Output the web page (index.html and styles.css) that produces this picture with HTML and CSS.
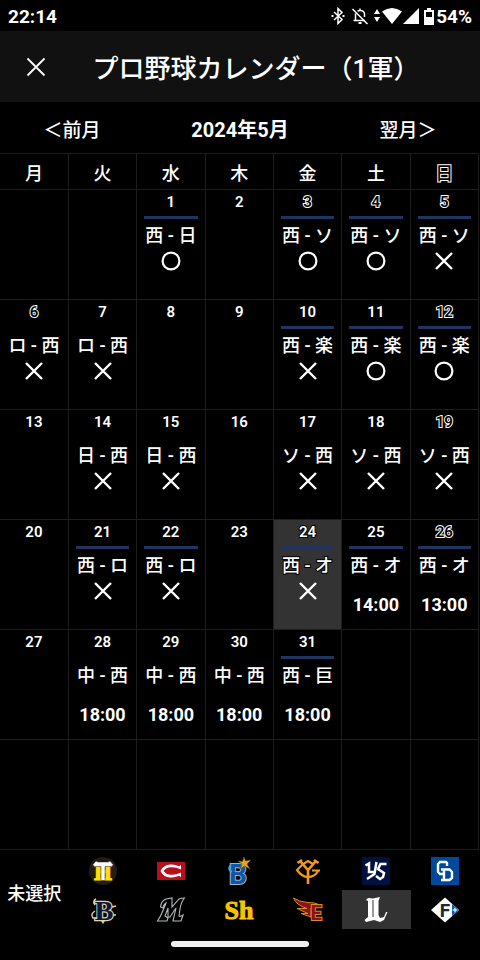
FILE: index.html
```
<!DOCTYPE html>
<html lang="ja">

<head>
    <meta charset="UTF-8">
    <meta name="viewport" content="width=device-width, initial-scale=1.0">
    <title>プロ野球カレンダー</title>
    <link rel="stylesheet" href="styles.css">
</head>

<body>

    <!-- result marks -->
    <svg class="defs" aria-hidden="true">
        <symbol id="win" viewBox="0 0 20 20">
            <circle cx="10" cy="10" r="8.4" fill="none" stroke="#fff" stroke-width="2.2" />
        </symbol>
        <symbol id="lose" viewBox="0 0 20 20">
            <path d="M2 2L18 18M18 2L2 18" fill="none" stroke="#fff" stroke-width="2.4" />
        </symbol>
    </svg>

    <div class="statusbar">
        <span class="clock">22:14</span>
        <div class="status-icons">
            <svg width="14" height="18" viewBox="0 0 14 18" fill="none" stroke="#fff" stroke-width="1.5">
                <path d="M3 5L11 12.5L7 16.5V1.500L11 5.500L3 13" />
                <path d="M0.500 9H2.500M11.500 9H13.500" stroke-width="2" />
            </svg>
            <svg class="bell" width="18" height="18" viewBox="0 0 18 18" fill="none" stroke="#fff" stroke-width="1.5">
                <path d="M4.500 6.500V13M2.500 13.500H14M13.500 10V7.500C13.500 5 12 3.500 9 3.500C8 3.500 7.300 3.700 6.500 4.200M9 3.500V1.500" />
                <path d="M1.500 2L16.500 17" />
                <path d="M7.500 16H10.500" stroke-width="2" />
            </svg>
            <svg class="data" width="6" height="14" viewBox="0 0 6 14" fill="#fff">
                <path d="M3 0L6 5H0ZM3 13L6 8H0Z" />
            </svg>
            <svg class="wifi" width="20" height="16" viewBox="0 0 20 16" fill="#fff">
                <path d="M0 3.500Q10 -3.500 20 3.500L10 16Z" />
            </svg>
            <svg class="signal" width="16" height="16" viewBox="0 0 16 16" fill="#fff">
                <path d="M16 0V16H0Z" />
            </svg>
            <svg class="battery" width="10" height="17" viewBox="0 0 10 17">
                <path d="M3 0H7V2H10V17H0V2H3Z" fill="#fff" />
                <path d="M2 4H8V9H2Z" fill="#000" />
            </svg>
            <span class="percent">54%</span>
        </div>
    </div>

    <header class="header">
        <button class="close" aria-label="閉じる">
            <svg width="20" height="20" viewBox="0 0 20 20" fill="none" stroke="#fff" stroke-width="1.8">
                <path d="M1.500 1.500L18.500 18.500M18.500 1.500L1.500 18.500" />
            </svg>
        </button>
        <h1>プロ野球カレンダー（1軍）</h1>
    </header>

    <nav class="month-nav">
        <button>＜前月</button>
        <h2>2024年5月</h2>
        <button>翌月＞</button>
    </nav>

    <table class="calendar">
        <thead>
            <tr>
                <th>月</th>
                <th>火</th>
                <th>水</th>
                <th>木</th>
                <th>金</th>
                <th>土</th>
                <th class="holiday">日</th>
            </tr>
        </thead>
        <tbody>
            <tr>
                <td></td>
                <td></td>
                <td class="home"><div class="date">1</div><div class="game">西 - 日</div><svg class="mark"><use href="#win" /></svg></td>
                <td><div class="date">2</div></td>
                <td class="home"><div class="date holiday">3</div><div class="game">西 - ソ</div><svg class="mark"><use href="#win" /></svg></td>
                <td class="home"><div class="date holiday">4</div><div class="game">西 - ソ</div><svg class="mark"><use href="#win" /></svg></td>
                <td class="home"><div class="date holiday">5</div><div class="game">西 - ソ</div><svg class="mark"><use href="#lose" /></svg></td>
            </tr>
            <tr>
                <td><div class="date holiday">6</div><div class="game">ロ - 西</div><svg class="mark"><use href="#lose" /></svg></td>
                <td><div class="date">7</div><div class="game">ロ - 西</div><svg class="mark"><use href="#lose" /></svg></td>
                <td><div class="date">8</div></td>
                <td><div class="date">9</div></td>
                <td class="home"><div class="date">10</div><div class="game">西 - 楽</div><svg class="mark"><use href="#lose" /></svg></td>
                <td class="home"><div class="date">11</div><div class="game">西 - 楽</div><svg class="mark"><use href="#win" /></svg></td>
                <td class="home"><div class="date holiday">12</div><div class="game">西 - 楽</div><svg class="mark"><use href="#win" /></svg></td>
            </tr>
            <tr>
                <td><div class="date">13</div></td>
                <td><div class="date">14</div><div class="game">日 - 西</div><svg class="mark"><use href="#lose" /></svg></td>
                <td><div class="date">15</div><div class="game">日 - 西</div><svg class="mark"><use href="#lose" /></svg></td>
                <td><div class="date">16</div></td>
                <td><div class="date">17</div><div class="game">ソ - 西</div><svg class="mark"><use href="#lose" /></svg></td>
                <td><div class="date">18</div><div class="game">ソ - 西</div><svg class="mark"><use href="#lose" /></svg></td>
                <td><div class="date holiday">19</div><div class="game">ソ - 西</div><svg class="mark"><use href="#lose" /></svg></td>
            </tr>
            <tr>
                <td><div class="date">20</div></td>
                <td class="home"><div class="date">21</div><div class="game">西 - ロ</div><svg class="mark"><use href="#lose" /></svg></td>
                <td class="home"><div class="date">22</div><div class="game">西 - ロ</div><svg class="mark"><use href="#lose" /></svg></td>
                <td><div class="date">23</div></td>
                <td class="home today"><div class="date">24</div><div class="game">西 - オ</div><svg class="mark"><use href="#lose" /></svg></td>
                <td class="home"><div class="date">25</div><div class="game">西 - オ</div><div class="time">14:00</div></td>
                <td class="home"><div class="date holiday">26</div><div class="game">西 - オ</div><div class="time">13:00</div></td>
            </tr>
            <tr>
                <td><div class="date">27</div></td>
                <td><div class="date">28</div><div class="game">中 - 西</div><div class="time">18:00</div></td>
                <td><div class="date">29</div><div class="game">中 - 西</div><div class="time">18:00</div></td>
                <td><div class="date">30</div><div class="game">中 - 西</div><div class="time">18:00</div></td>
                <td class="home"><div class="date">31</div><div class="game">西 - 巨</div><div class="time">18:00</div></td>
                <td></td>
                <td></td>
            </tr>
            <tr>
                <td></td>
                <td></td>
                <td></td>
                <td></td>
                <td></td>
                <td></td>
                <td></td>
            </tr>
        </tbody>
    </table>

    <div class="teams">
        <button class="none">未選択</button>

        <button aria-label="阪神">
            <svg class="logo" viewBox="0 0 28 28">
                <circle cx="14" cy="14" r="14" fill="#231a1a" />
                <text x="14" y="23" font-size="20" fill="#ffe100" stroke="#ffe100" class="slab">H</text>
                <path d="M3.500 8L7 4L9 5H19L21 4L24.500 8L22 9.500H16V23.500H12V9.500H6Z" fill="#fff" stroke="#231a1a" stroke-width="0.500" />
            </svg>
        </button>
        <button aria-label="広島">
            <svg class="logo" viewBox="0 0 28 28">
                <rect y="5" width="28" height="18" fill="#b90e1c" />
                <path d="M24 8V12.500Q19 10 14 10.300Q9 10.500 6.500 14Q9 17.500 14 17.700Q19 18 24 15.500V20L22 18.800Q18 20.800 13.500 20.500Q6 20 3.500 14Q6 8 13.500 7.500Q18 7.200 22 9.200Z" fill="#fff" />
            </svg>
        </button>
        <button aria-label="DeNA">
            <svg class="logo" viewBox="0 0 28 28">
                <text x="13" y="27" font-size="28" fill="#0a57ad" stroke="#9eb4c4" stroke-width="2" class="sans">B</text>
                <path d="M6 8Q2 12 7 15" fill="none" stroke="#38a7df" stroke-width="2" />
                <path d="M19 0L20.500 4L26 3L22 7L25 12L19.500 9L15 12L17 7L13 4L17.500 4.500Z" fill="#eaa620" stroke="#6b4d16" stroke-width="0.600" />
            </svg>
        </button>
        <button aria-label="巨人">
            <svg class="logo" viewBox="0 0 28 28" fill="none" stroke="#f39a17">
                <path d="M6 4L14 13L22 4M3.500 6L8 3M20 3L24.500 6M14 13V27" stroke-width="2.600" />
                <path d="M19 7L14 4L9 7L3 13Q8 20 14 20Q21 20 24 14M18 13.500H26" stroke-width="2.200" />
            </svg>
        </button>
        <button aria-label="ヤクルト">
            <svg class="logo" viewBox="0 0 28 28">
                <rect width="28" height="28" fill="#00103f" />
                <g fill="none" stroke="#fff" stroke-width="2.500">
                    <path d="M3.500 8.500L7 6.500V15H12M14.500 5L12.500 17L5 22" />
                    <path d="M24.500 7H18.500L16 12L22 16L21 20L18 22L14 19" />
                </g>
            </svg>
        </button>
        <button aria-label="中日">
            <svg class="logo" viewBox="0 0 28 28">
                <rect width="28" height="28" fill="#00499a" />
                <g fill="none" stroke="#fff" stroke-width="2.400">
                    <path d="M16 9V6L15 5H9L7 7V15L9 17H12" />
                    <path d="M10 12.500H18.500L21 15V21L18.500 23H10M13 13V23" />
                </g>
            </svg>
        </button>

        <button aria-label="オリックス">
            <svg class="logo" viewBox="0 0 28 28">
                <path d="M10 22L14 28L18 22Z" fill="#d8c98c" />
                <text x="15" y="24" font-size="28" fill="#10173f" stroke="#e0d49f" stroke-width="2.400" class="serif">B</text>
                <path d="M7 3Q3 5 6 9M6 15Q1 18 4 22L8 22M23 11L27 10M24 19L27 19" fill="none" stroke="#e0d49f" stroke-width="1.400" />
                <path d="M10 6V22" stroke="#10173f" stroke-width="3" />
            </svg>
        </button>
        <button aria-label="ロッテ">
            <svg class="logo" viewBox="0 0 28 28" fill="#000" stroke="#b5b7b9" stroke-width="1.100">
                <path d="M0.500 25Q4 20 7 12L9 7Q6 9 6 12L3.500 11Q4 5 9 3L15 2V11L22 3Q24 2 27.500 2Q24 6 23 13L22 20Q23 21 26 19L24 25H16L19 12L13 21H11V12L8 20L11 22L10 25Z" />
            </svg>
        </button>
        <button aria-label="ソフトバンク">
            <svg class="logo" viewBox="0 0 28 28">
                <text x="14" y="23" font-size="26" fill="#f8c400" stroke="#f8c400" class="serif">Sh</text>
            </svg>
        </button>
        <button aria-label="楽天">
            <svg class="logo wide" viewBox="0 0 30 28">
                <path d="M0.500 2Q6 6 15 6.500Q23 6.500 26 9L18 12V21L8 17.500H15L4 12.500H14Q3 9 0.500 2Z" fill="#930c20" stroke="#cf9117" stroke-width="1" />
                <text x="23" y="24" font-size="20" fill="#930c20" stroke="#cf9117" stroke-width="2" class="sans">E</text>
            </svg>
        </button>
        <button class="selected" aria-label="西武" aria-pressed="true">
            <svg class="logo" viewBox="0 0 28 28">
                <path d="M4 4L6 2L11 2.500L18 1L16.500 5V19L18 22L22 21L24 16H25.500L22 24L18 26L12 24L4 26L2.500 24L6 21V5Z" fill="#fff" />
                <path d="M11 4V21" stroke="#333" stroke-width="1" />
            </svg>
        </button>
        <button aria-label="日本ハム">
            <svg class="logo" viewBox="0 0 28 28">
                <path d="M14 1.500L28 14L14 26.500L0 14Z" fill="#fff" />
                <path d="M21 8L28 14L21 20Z" fill="#0a5ba5" />
                <path d="M24 11L25 13L27 14L25 15L24 17L23 15L21 14L23 13Z" fill="#bce5ff" />
                <text x="14" y="21" font-size="19" fill="#24272b" class="sans">F</text>
            </svg>
        </button>
    </div>

    <div class="gesture"></div>

</body>

</html>
```
FILE: styles.css
```
* {
    box-sizing: border-box;
}

body {
    margin: 0;
    background-color: #000;
    color: #fff;
    font-family: Roboto, "Noto Sans CJK JP", sans-serif;
    font-weight: 500;
}

button {
    border: none;
    padding: 0;
    background: none;
    color: inherit;
    font: inherit;
    cursor: pointer;
}

svg {
    display: block;
}

.defs {
    display: none;
}

.statusbar {
    display: flex;
    justify-content: space-between;
    align-items: center;
    height: 31px;
    padding: 1px 8px 0;
    font-size: 19px;
    font-weight: 700;
}

.status-icons {
    display: flex;
    align-items: center;
}

.bell {
    margin-left: 6px;
}

.data {
    margin-left: 5px;
}

.wifi {
    margin-left: 2px;
}

.signal {
    margin-left: 1px;
}

.battery {
    margin-left: 5px;
}

.percent {
    margin-left: 2px;
}

.header {
    display: flex;
    align-items: center;
    height: 71px;
    padding-right: 40px;
    background-color: #111;
}

.close {
    display: flex;
    justify-content: center;
    align-items: center;
    width: 72px;
    height: 72px;
}

.header h1 {
    flex: 1;
    margin: 0;
    font-size: 26px;
    font-weight: 500;
    text-align: center;
    white-space: nowrap;
}

.month-nav {
    display: grid;
    grid-template-columns: 3fr 4fr 3fr;
    align-items: center;
    height: 51px;
    padding-top: 2px;
    font-size: 19px;
    text-align: center;
}

.month-nav h2 {
    margin: 0;
    font-size: 20px;
    font-weight: 700;
}

.calendar {
    width: calc(100% - 1px);
    table-layout: fixed;
    border-collapse: collapse;
    text-align: center;
}

.calendar th,
.calendar td {
    padding: 0;
    border: 1px solid #1e1e1e;
}

.calendar th:first-child,
.calendar td:first-child {
    border-left: none;
}

.calendar th {
    height: 36px;
    font-size: 18px;
    font-weight: 500;
}

.calendar td {
    height: 110px;
    vertical-align: top;
}

.date,
.game,
.time {
    -webkit-text-stroke: 2px #000;
    paint-order: stroke fill;
}

.date {
    height: 29px;
    margin: 0 7px 5px;
    font-size: 15px;
    font-weight: 600;
    line-height: 24px;
}

.home .date {
    border-bottom: 3px solid #20345f;
}

/* hollow digits for sundays and holidays */
.calendar .holiday {
    color: #000;
    -webkit-text-stroke: 2px #fff;
    paint-order: stroke fill;
}

.game {
    font-size: 18px;
    line-height: 24px;
    white-space: nowrap;
}

.mark {
    width: 20px;
    height: 20px;
    margin: 3px auto 0;
}

.time {
    margin-top: 15px;
    font-size: 18px;
    font-weight: 700;
    line-height: 24px;
}

.today,
.selected {
    background-color: #333;
}

.teams {
    display: grid;
    grid-template-columns: repeat(7, 1fr);
    grid-auto-rows: 39px;
    padding: 1px 1px 0 0;
}

.none {
    grid-row: span 2;
    padding-top: 4px;
    font-size: 18px;
}

.teams button {
    display: flex;
    justify-content: center;
    align-items: center;
}

.logo {
    width: 28px;
    height: 28px;
    overflow: visible;
}

.wide {
    width: 30px;
}

.logo text {
    text-anchor: middle;
    font-weight: 700;
    paint-order: stroke fill;
}

.slab {
    font-family: "DejaVu Serif", serif;
}

.serif {
    font-family: "Liberation Serif", serif;
}

.sans {
    font-family: Roboto, sans-serif;
}

.gesture {
    width: 138px;
    height: 6px;
    margin: 12px auto 0;
    border-radius: 3px;
    background-color: #eee;
}
```
